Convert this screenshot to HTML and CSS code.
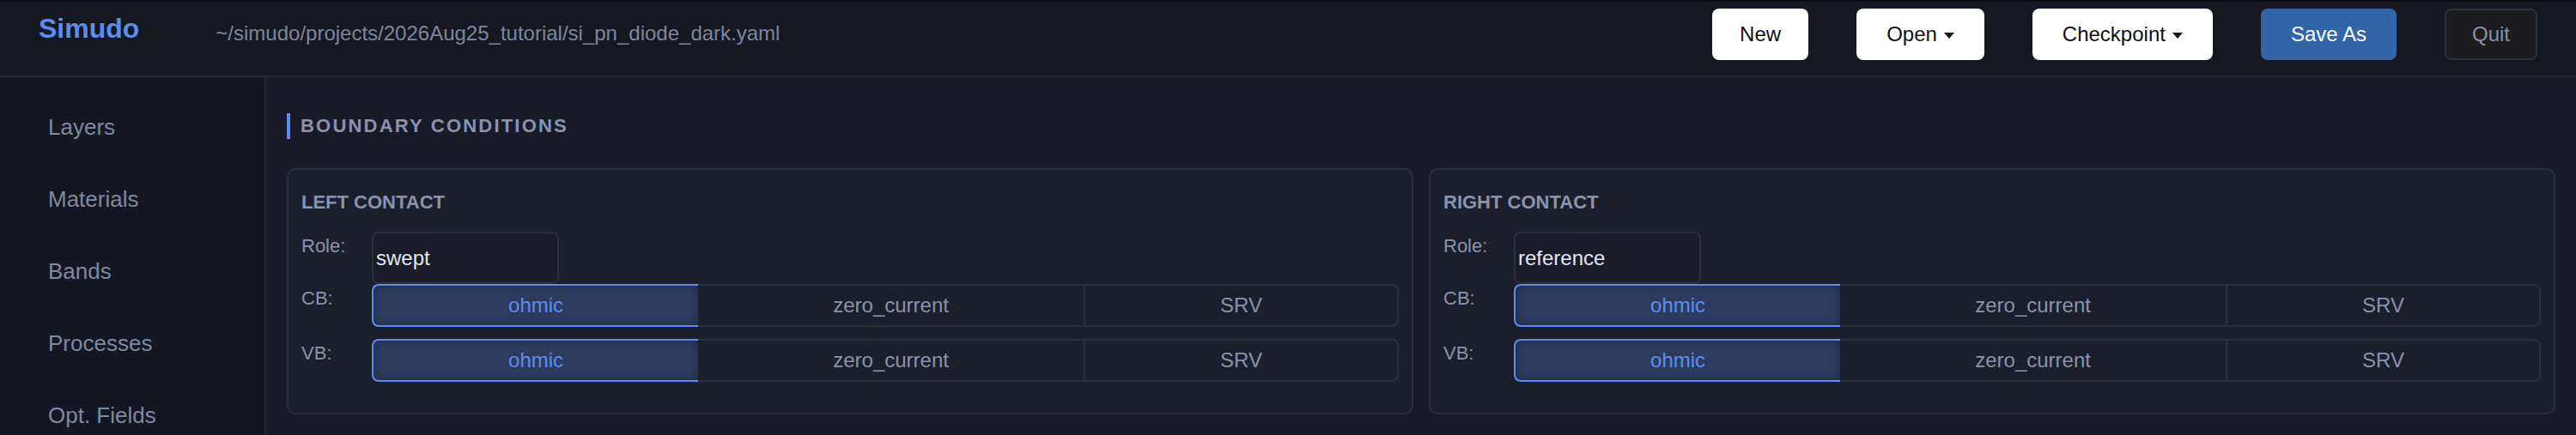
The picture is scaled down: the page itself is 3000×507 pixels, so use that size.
FILE: index.html
```html
<!DOCTYPE html>
<html lang="en">
<head>
<meta charset="utf-8">
<title>Simudo</title>
<link rel="stylesheet" href="styles.css">
</head>
<body>
<div class="app">
  <header class="topbar">
    <div class="brand">
      <span class="logo">Simudo</span>
      <span class="path">~/simudo/projects/2026Aug25_tutorial/si_pn_diode_dark.yaml</span>
    </div>
    <div class="actions">
      <button class="btn">New</button>
      <button class="btn btn-drop">Open<span class="caret"></span></button>
      <button class="btn btn-drop">Checkpoint<span class="caret"></span></button>
      <button class="btn btn-primary">Save As</button>
      <button class="btn btn-quit">Quit</button>
    </div>
  </header>
  <div class="layout">
    <nav class="sidebar">
      <a class="nav-item">Layers</a>
      <a class="nav-item">Materials</a>
      <a class="nav-item">Bands</a>
      <a class="nav-item">Processes</a>
      <a class="nav-item">Opt. Fields</a>
    </nav>
    <main class="main">
      <h2 class="section-title">BOUNDARY CONDITIONS</h2>
      <div class="cards">
        <section class="card">
          <h3 class="card-title">LEFT CONTACT</h3>
          <div class="field">
            <span class="label">Role:</span>
            <span class="input">swept</span>
          </div>
          <div class="field field-gap">
            <span class="label">CB:</span>
            <div class="seg">
              <span class="opt active">ohmic</span>
              <span class="opt">zero_current</span>
              <span class="opt">SRV</span>
            </div>
          </div>
          <div class="field">
            <span class="label">VB:</span>
            <div class="seg">
              <span class="opt active">ohmic</span>
              <span class="opt">zero_current</span>
              <span class="opt">SRV</span>
            </div>
          </div>
        </section>
        <section class="card">
          <h3 class="card-title">RIGHT CONTACT</h3>
          <div class="field">
            <span class="label">Role:</span>
            <span class="input">reference</span>
          </div>
          <div class="field field-gap">
            <span class="label">CB:</span>
            <div class="seg">
              <span class="opt active">ohmic</span>
              <span class="opt">zero_current</span>
              <span class="opt">SRV</span>
            </div>
          </div>
          <div class="field">
            <span class="label">VB:</span>
            <div class="seg">
              <span class="opt active">ohmic</span>
              <span class="opt">zero_current</span>
              <span class="opt">SRV</span>
            </div>
          </div>
        </section>
      </div>
    </main>
  </div>
</div>
</body>
</html>
```

FILE: styles.css
```css
* { box-sizing: border-box; }

html, body {
  margin: 0;
  height: 507px;
  overflow: hidden;
  background: #181b27;
  font-family: "Liberation Sans", Arial, Helvetica, sans-serif;
}

.app {
  height: 507px;
  display: flex;
  flex-direction: column;
  border-top: 2px solid #08090c;
}

/* ---------- top bar ---------- */
.topbar {
  flex-shrink: 0;
  display: flex;
  justify-content: space-between;
  align-items: flex-start;
  height: 88px;
  padding: 8px 45px 18px;
  background: #151821;
  border-bottom: 2px solid #252a37;
}

.brand {
  display: flex;
  align-items: flex-start;
  margin-top: 5px;
}

.logo {
  font-size: 32px;
  font-weight: 700;
  color: #5b8def;
}

.path {
  margin-left: 89px;
  margin-top: 10px;
  font-size: 24px;
  color: #7d869e;
}

.actions {
  display: flex;
  gap: 56px;
}

.btn {
  display: inline-flex;
  align-items: center;
  height: 60px;
  padding: 0 32px;
  border: none;
  border-radius: 8px;
  background: #ffffff;
  color: #111111;
  font-family: "Liberation Sans", Arial, Helvetica, sans-serif;
  font-size: 24px;
}

.btn-drop { padding: 0 35px; }

.caret {
  width: 0;
  height: 0;
  margin-left: 8px;
  margin-top: 2px;
  border-left: 6.5px solid transparent;
  border-right: 6.5px solid transparent;
  border-top: 7px solid #111111;
}

.btn-primary {
  padding: 0 35px;
  background: #3264a8;
  color: #ffffff;
}

.btn-quit {
  padding: 0 30px;
  background: #1c1c1f;
  border: 2px solid #2b2f3b;
  color: #8591a8;
}

/* ---------- layout ---------- */
.layout {
  flex: 1;
  display: flex;
  min-height: 0;
}

.sidebar {
  flex-shrink: 0;
  width: 310px;
  padding-top: 16px;
  background: #141721;
  border-right: 2px solid #222633;
}

.nav-item {
  display: block;
  padding: 27px 0 27px 56px;
  font-size: 26px;
  line-height: 30px;
  color: #7f89a2;
}

.main {
  flex: 1;
  min-width: 0;
  padding: 42px 24px 0 24px;
}

.section-title {
  margin: 0;
  padding-left: 12px;
  border-left: 4px solid #5b8def;
  font-size: 22px;
  font-weight: 700;
  line-height: 30px;
  letter-spacing: 2.2px;
  color: #8a93ab;
}

.cards {
  display: flex;
  gap: 18px;
  margin-top: 34px;
}

.card {
  flex: 1;
  min-width: 0;
  padding: 25px 15px 36px;
  background: #1b1f2c;
  border: 2px solid #2a2f3c;
  border-radius: 10px;
}

.card-title {
  margin: 0 0 21px;
  font-size: 22px;
  font-weight: 700;
  line-height: 26px;
  color: #8a94ac;
}

.field {
  display: flex;
  align-items: flex-start;
}

.field-gap { margin-bottom: 14px; }

.label {
  flex-shrink: 0;
  width: 82px;
  padding-top: 4px;
  font-size: 22px;
  color: #8a93aa;
}

.input {
  display: flex;
  align-items: center;
  width: 218px;
  height: 61px;
  padding-left: 3px;
  background: #1a1d29;
  border: 2px solid #2a2f3c;
  border-radius: 8px;
  font-size: 24px;
  color: #e4e7ee;
}

.seg {
  flex: 1;
  display: flex;
  height: 50px;
}

.opt {
  flex: 1 1 auto;
  display: flex;
  align-items: center;
  justify-content: center;
  border: 2px solid #2a2f3c;
  border-left-width: 0;
  font-size: 24px;
  color: #8a93ab;
}

.opt:first-child {
  border-left-width: 2px;
  border-radius: 8px 0 0 8px;
}

.opt:last-child {
  border-radius: 0 8px 8px 0;
}

.opt.active {
  background: #2d3c5e;
  border-color: #5b8def;
  border-right-width: 0;
  color: #5b8def;
  box-shadow: inset 0 0 10px rgba(0, 0, 0, 0.35);
}
```
